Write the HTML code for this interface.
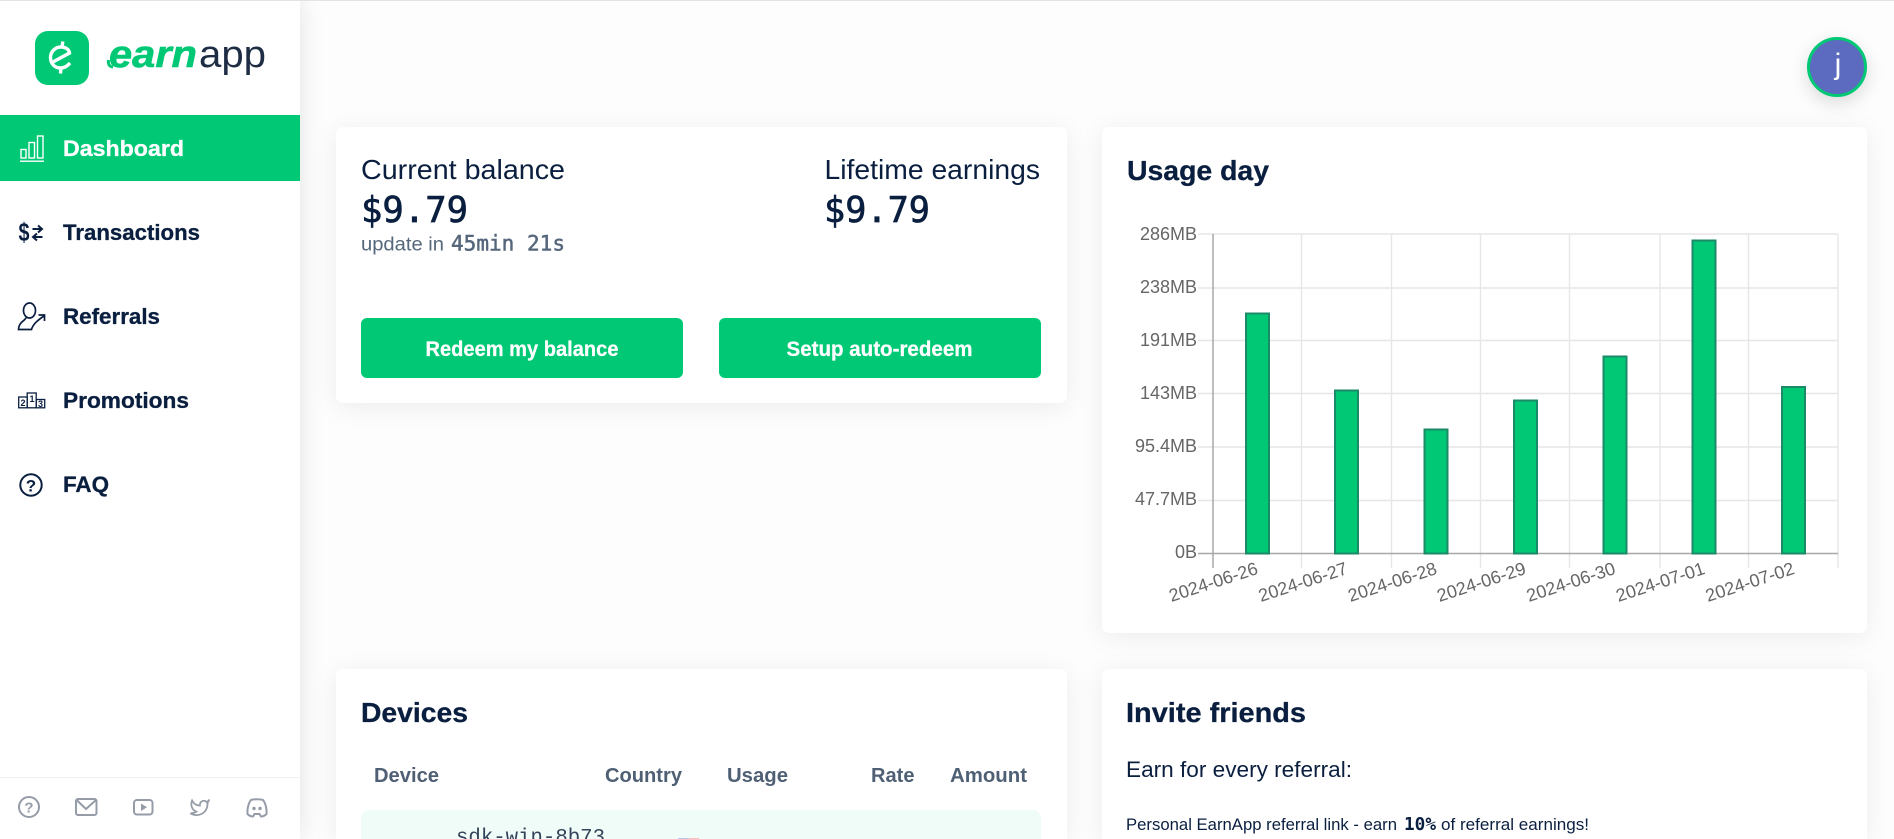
<!DOCTYPE html>
<html lang="en">
<head>
<meta charset="utf-8">
<title>EarnApp Dashboard</title>
<style>
html,body{margin:0;padding:0;width:1894px;height:839px;overflow:hidden;background:#fdfdfd;}
body{position:relative;font-family:"Liberation Sans",sans-serif;}
.top{position:absolute;left:0;top:0;width:1894px;height:1px;background:#e3e3e3;z-index:5;}
.side{position:absolute;left:0;top:0;width:300px;height:839px;background:#fff;box-shadow:0 0 24px rgba(0,0,0,.11);clip-path:inset(0 -40px 0 0);}
.active{position:absolute;left:0;top:115px;width:300px;height:66px;background:#00c875;}
.foot{position:absolute;left:0;top:777px;width:300px;height:1px;background:#f2f2f2;}
.card{position:absolute;background:#fff;border-radius:7px;box-shadow:0 4px 26px rgba(0,0,0,.07);}
.cardb{position:absolute;background:#fff;border-radius:7px 7px 0 0;box-shadow:0 4px 26px rgba(0,0,0,.07);clip-path:inset(-40px -40px 0 -40px);}
.btn{position:absolute;background:#00c875;border-radius:6px;top:318px;height:60px;}
.row{position:absolute;left:361px;top:810px;width:680px;height:29px;background:#f0fcf8;border-radius:8px 8px 0 0;}
.flag{position:absolute;left:678px;top:838px;width:21px;height:1px;background:linear-gradient(90deg,#b9c8e8 50%,#f6c2c2 50%);}
.avatar{position:absolute;left:1807px;top:37px;width:54px;height:54px;border:3px solid #00c875;border-radius:50%;background:#5c6bc0;box-shadow:0 6px 18px rgba(0,0,0,.14);}
svg{position:absolute;left:0;top:0;}
text{font-family:"Liberation Sans",sans-serif;}
.m{font-family:"DejaVu Sans Mono",monospace;}
.lm{font-family:"Liberation Mono",monospace;}
.nav{font-size:22px;font-weight:700;fill:#0a1f3f;stroke:#0a1f3f;stroke-width:.3px;}
.h{font-size:28px;font-weight:700;fill:#0a1f3f;stroke:#0a1f3f;stroke-width:.3px;}
.th{font-size:20px;font-weight:700;fill:#4f6075;}
.y{font-size:18px;fill:#666;text-anchor:end;}
.x{font-size:18px;fill:#666;text-anchor:end;}
.bar{fill:#00c875;stroke:#1a8a68;stroke-width:2;}
</style>
</head>
<body>
<div class="side"></div>
<div class="active"></div>
<div class="foot"></div>
<div class="card" style="left:336px;top:127px;width:731px;height:276px"></div>
<div class="card" style="left:1102px;top:127px;width:765px;height:506px"></div>
<div class="cardb" style="left:336px;top:669px;width:731px;height:170px"></div>
<div class="cardb" style="left:1102px;top:669px;width:765px;height:170px"></div>
<div class="btn" style="left:361px;width:322px"></div>
<div class="btn" style="left:719px;width:322px"></div>
<div class="row"></div>
<div class="flag"></div>
<div class="avatar"></div>
<div class="top"></div>

<svg width="1894" height="839" viewBox="0 0 1894 839" xmlns="http://www.w3.org/2000/svg">
  <!-- logo -->
  <rect x="35" y="31" width="54" height="54" rx="13" fill="#00c875"/>
  <path d="M52 62.5L69.5 53C69 49 65 47 61 47C55 47 50.5 52 50.5 57.5C50.5 64 55 68 60.5 68C64.5 68 67.5 66 70 63M62.8 41.5L62 47M61 68.5L60.4 73.5" fill="none" stroke="#fff" stroke-width="3.4"/>
  <text x="109" y="67" font-size="38" font-weight="700" font-style="italic" fill="#00c875" stroke="#00c875" stroke-width=".6" textLength="88" lengthAdjust="spacingAndGlyphs">earn</text>
  <path d="M108.5 60Q107.5 66.5 113 67" fill="none" stroke="#00c875" stroke-width="3"/>
  <text x="199" y="67" font-size="38" fill="#1f2d44" textLength="67" lengthAdjust="spacingAndGlyphs">app</text>

  <!-- nav -->
  <g fill="none" stroke="#fff" stroke-width="1.4">
    <rect x="21" y="149.5" width="5" height="8.5"/>
    <rect x="29" y="142.5" width="5.5" height="15.5"/>
    <rect x="37.5" y="136" width="5.5" height="22"/>
    <path d="M20 161.2H44"/>
  </g>
  <text class="nav" x="63" y="156" style="fill:#fff;stroke:#fff" textLength="121" lengthAdjust="spacingAndGlyphs">Dashboard</text>

  <text x="18.5" y="241" font-size="26" font-weight="700" fill="#0a1f3f" textLength="11" lengthAdjust="spacingAndGlyphs">$</text>
  <g fill="none" stroke="#0a1f3f" stroke-width="2">
    <path d="M32.5 229H42M38 225.5L42 229L38 232.5"/>
    <path d="M42.5 237H33M37 233.5L33 237L37 240.5"/>
  </g>
  <text class="nav" x="63" y="240" textLength="137" lengthAdjust="spacingAndGlyphs">Transactions</text>

  <g fill="none" stroke="#0a1f3f" stroke-width="1.7">
    <ellipse cx="29.5" cy="310.5" rx="6" ry="7.5"/>
    <path d="M26 317.5C26 320.5 19 321 18.5 329.5H31.5C33 324 38 320 44 316"/>
    <path d="M38.5 315H44.5V321"/>
  </g>
  <text class="nav" x="63" y="324" textLength="97" lengthAdjust="spacingAndGlyphs">Referrals</text>

  <g fill="none" stroke="#0a1f3f" stroke-width="1.3">
    <rect x="18.7" y="397" width="8.5" height="10.8"/>
    <rect x="27.2" y="393" width="9" height="14.8"/>
    <rect x="36.2" y="399.5" width="8.5" height="8.3"/>
  </g>
  <text x="20.5" y="406" font-size="9" font-weight="700" fill="#0a1f3f">2</text>
  <text x="29.5" y="402" font-size="9" font-weight="700" fill="#0a1f3f">1</text>
  <text x="38" y="407" font-size="9" font-weight="700" fill="#0a1f3f">3</text>
  <text class="nav" x="63" y="408" textLength="126" lengthAdjust="spacingAndGlyphs">Promotions</text>

  <circle cx="31" cy="485" r="10.7" fill="none" stroke="#0a1f3f" stroke-width="2"/>
  <text x="31" y="491.5" font-size="17" font-weight="700" fill="#0a1f3f" text-anchor="middle">?</text>
  <text class="nav" x="63" y="492" textLength="46" lengthAdjust="spacingAndGlyphs">FAQ</text>

  <!-- sidebar footer icons -->
  <g fill="none" stroke="#959ca8" stroke-width="2">
    <circle cx="29" cy="807" r="10"/>
    <rect x="76" y="799" width="20.5" height="16" rx="2"/>
    <path d="M76.5 800L86 809L96 800"/>
    <rect x="134" y="800" width="18.5" height="14.5" rx="3"/>
    <path transform="translate(189.5,797) scale(.86)" d="M23 3a10.9 10.9 0 0 1-3 3 4.48 4.48 0 0 0-7.86 3v1A10.66 10.66 0 0 1 3 4s-4 9 5 13a11.64 11.64 0 0 1-7 2c9 5 20 0 20-11.5a4.5 4.5 0 0 0-.08-.83A7.72 7.72 0 0 0 23 3z"/>
    <path d="M251 800C254 799 260 799 263 800C265.5 803 267 809 266.5 814C264.5 816 262.5 816.5 261 816.5L259.5 814H254.5L253 816.5C251.5 816.5 249.5 816 247.5 814C247 809 248.5 803 251 800Z"/>
  </g>
  <text x="29" y="812.5" font-size="15" font-weight="700" fill="#959ca8" text-anchor="middle">?</text>
  <path d="M141 803.5V811L147 807.2Z" fill="#959ca8"/>
  <circle cx="254" cy="808.5" r="1.7" fill="#959ca8"/>
  <circle cx="260" cy="808.5" r="1.7" fill="#959ca8"/>

  <!-- balance card -->
  <text x="361" y="179" font-size="28" fill="#0a1f3f" textLength="204" lengthAdjust="spacingAndGlyphs">Current balance</text>
  <text x="824.5" y="179" font-size="28" fill="#0a1f3f" textLength="215.5" lengthAdjust="spacingAndGlyphs">Lifetime earnings</text>
  <text class="m" x="361" y="222" font-size="36" fill="#0a1f3f" stroke="#0a1f3f" stroke-width=".7" textLength="107" lengthAdjust="spacingAndGlyphs">$9.79</text>
  <text class="m" x="824" y="222" font-size="36" fill="#0a1f3f" stroke="#0a1f3f" stroke-width=".7" textLength="106" lengthAdjust="spacingAndGlyphs">$9.79</text>
  <text x="361" y="250.5" font-size="19" fill="#56677c" textLength="83" lengthAdjust="spacingAndGlyphs">update in</text>
  <text class="m" x="451" y="250.5" font-size="21" fill="#56677c" stroke="#56677c" stroke-width=".5" textLength="114" lengthAdjust="spacingAndGlyphs">45min 21s</text>
  <text x="425.5" y="356" font-size="21" font-weight="700" fill="#fff" stroke="#fff" stroke-width=".25" textLength="193" lengthAdjust="spacingAndGlyphs">Redeem my balance</text>
  <text x="786.5" y="356" font-size="21" font-weight="700" fill="#fff" stroke="#fff" stroke-width=".25" textLength="186" lengthAdjust="spacingAndGlyphs">Setup auto-redeem</text>

  <!-- chart -->
  <text class="h" x="1127" y="180" textLength="142" lengthAdjust="spacingAndGlyphs">Usage day</text>
  <g stroke="#e6e6e6" stroke-width="1.4" fill="none">
    <path d="M1198 234H1838M1198 288H1838M1198 340.5H1838M1198 393.5H1838M1198 447H1838M1198 500.5H1838"/>
    <path d="M1301.5 234V568M1391.5 234V568M1480.5 234V568M1569.5 234V568M1660 234V568M1748.5 234V568M1838 234V568"/>
  </g>
  <path d="M1213 234V568M1198 553.5H1838" stroke="#a8a8a8" stroke-width="1.5" fill="none"/>
  <rect class="bar" x="1246" y="313.5" width="23" height="240"/>
  <rect class="bar" x="1335" y="390.5" width="23" height="163"/>
  <rect class="bar" x="1424.5" y="429.5" width="23" height="124"/>
  <rect class="bar" x="1514" y="400.5" width="23" height="153"/>
  <rect class="bar" x="1603.5" y="356.5" width="23" height="197"/>
  <rect class="bar" x="1692.5" y="240.5" width="23" height="313"/>
  <rect class="bar" x="1782" y="387" width="23" height="166.5"/>
  <text class="y" x="1197" y="240">286MB</text>
  <text class="y" x="1197" y="293">238MB</text>
  <text class="y" x="1197" y="346">191MB</text>
  <text class="y" x="1197" y="399">143MB</text>
  <text class="y" x="1197" y="452">95.4MB</text>
  <text class="y" x="1197" y="505">47.7MB</text>
  <text class="y" x="1197" y="558">0B</text>
  <text class="x" transform="translate(1259,573.5) rotate(-18)">2024-06-26</text>
  <text class="x" transform="translate(1348.5,573.5) rotate(-18)">2024-06-27</text>
  <text class="x" transform="translate(1438,573.5) rotate(-18)">2024-06-28</text>
  <text class="x" transform="translate(1527,573.5) rotate(-18)">2024-06-29</text>
  <text class="x" transform="translate(1616.5,573.5) rotate(-18)">2024-06-30</text>
  <text class="x" transform="translate(1706,573.5) rotate(-18)">2024-07-01</text>
  <text class="x" transform="translate(1795.5,573.5) rotate(-18)">2024-07-02</text>

  <!-- devices -->
  <text class="h" x="361" y="722" textLength="107" lengthAdjust="spacingAndGlyphs">Devices</text>
  <text class="th" x="374" y="782" textLength="65" lengthAdjust="spacingAndGlyphs">Device</text>
  <text class="th" x="605" y="782" textLength="77" lengthAdjust="spacingAndGlyphs">Country</text>
  <text class="th" x="727" y="782" textLength="61" lengthAdjust="spacingAndGlyphs">Usage</text>
  <text class="th" x="871" y="782" textLength="43.5" lengthAdjust="spacingAndGlyphs">Rate</text>
  <text class="th" x="950" y="782" textLength="77" lengthAdjust="spacingAndGlyphs">Amount</text>
  <text class="lm" x="456" y="843" font-size="20.8" fill="#33445a" textLength="149" lengthAdjust="spacingAndGlyphs">sdk-win-8b73</text>

  <!-- invite -->
  <text class="h" x="1126" y="722" textLength="180" lengthAdjust="spacingAndGlyphs">Invite friends</text>
  <text x="1126" y="777" font-size="22" fill="#0a1f3f" textLength="226" lengthAdjust="spacingAndGlyphs">Earn for every referral:</text>
  <text x="1126" y="830" font-size="17" fill="#0a1f3f" textLength="271" lengthAdjust="spacingAndGlyphs">Personal EarnApp referral link - earn</text>
  <text class="m" x="1404" y="830" font-size="18" font-weight="700" fill="#0a1f3f" textLength="32" lengthAdjust="spacingAndGlyphs">10%</text>
  <text x="1441" y="830" font-size="17" fill="#0a1f3f" textLength="148" lengthAdjust="spacingAndGlyphs">of referral earnings!</text>

  <!-- avatar letter -->
  <text x="1838" y="74" font-size="30" fill="#fff" text-anchor="middle">j</text>
</svg>
</body>
</html>
